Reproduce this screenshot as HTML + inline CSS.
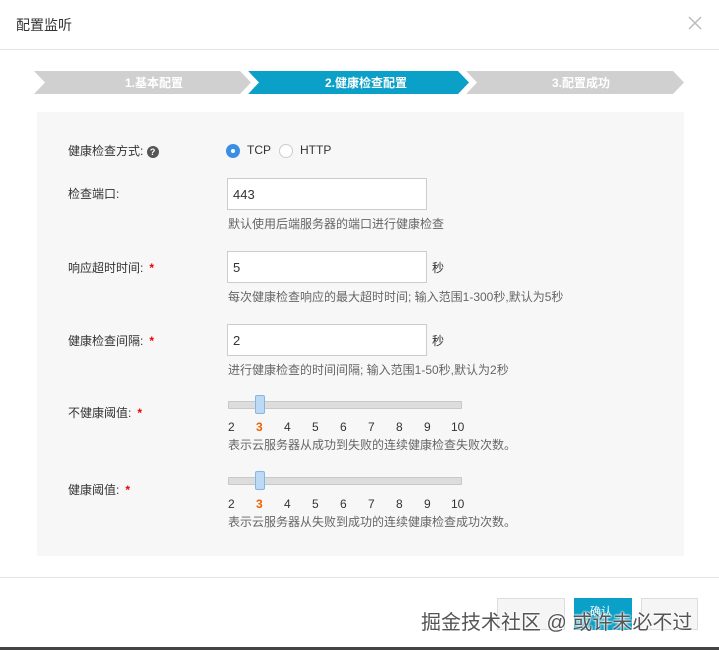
<!DOCTYPE html>
<html><head><meta charset="utf-8"><style>
*{margin:0;padding:0;box-sizing:border-box}
body{width:719px;height:650px;background:#fff;position:relative;overflow:hidden;font-family:"Liberation Sans","Noto Sans CJK SC",sans-serif;color:#333}
.a{position:absolute;white-space:nowrap}
.lbl{font-size:12px;color:#333}
.hint{font-size:12px;color:#666}
.inp{position:absolute;border:1px solid #ccc;background:#fff;height:32px;font-size:13px;padding:8px 0 0 5px;color:#333}
.star{color:#e00;font-weight:bold;margin-left:6px}
.track{position:absolute;left:228px;width:234px;height:8px;background:#ddd;border:1px solid #c8c8c8;border-radius:1px}
.thumb{position:absolute;left:255px;width:10px;height:19px;background:#bcd9f5;border:1px solid #88b5e0;border-radius:2px}
.num{position:absolute;font-size:12px;color:#333}
</style></head><body>
<div class="a" style="left:16px;top:15px;font-size:14px;color:#333">配置监听</div>
<svg class="a" style="left:688px;top:16px" width="14" height="14"><path d="M1 1L13 13M13 1L1 13" stroke="#bbb" stroke-width="1.5"/></svg>
<div class="a" style="left:0;top:49px;width:719px;height:1px;background:#e5e5e5"></div>
<svg class="a" style="left:0;top:70px" width="719" height="26">
<polygon points="34,1 240,1 251,12.5 240,24 34,24 45,12.5" fill="#d0d0d0"/>
<polygon points="248,1 458,1 469,12.5 458,24 248,24 259,12.5" fill="#0aa0c8"/>
<polygon points="466,1 673,1 684,12.5 673,24 466,24 477,12.5" fill="#d0d0d0"/>
<polyline points="246,0 257,12.5 246,25" fill="none" stroke="#fff" stroke-width="2"/>
<polyline points="464,0 475,12.5 464,25" fill="none" stroke="#fff" stroke-width="2"/>
<text x="154" y="17" font-size="12" fill="#fff" text-anchor="middle" font-family="Liberation Sans,Noto Sans CJK SC,sans-serif" font-weight="bold">1.基本配置</text>
<text x="366" y="17" font-size="12" fill="#fff" text-anchor="middle" font-family="Liberation Sans,Noto Sans CJK SC,sans-serif" font-weight="bold">2.健康检查配置</text>
<text x="581" y="17" font-size="12" fill="#fff" text-anchor="middle" font-family="Liberation Sans,Noto Sans CJK SC,sans-serif" font-weight="bold">3.配置成功</text>
</svg>
<div class="a" style="left:37px;top:112px;width:647px;height:444px;background:#f7f7f7"></div>

<div class="a lbl" style="left:68px;top:142px">健康检查方式: <span style="display:inline-block;width:12px;height:12px;border-radius:6px;background:#555;color:#fff;font-size:9px;text-align:center;line-height:12px;font-weight:bold;vertical-align:0px">?</span></div>
<div class="a" style="left:226px;top:144px;width:14px;height:14px;border-radius:7px;background:#3a8ee6"><div style="position:absolute;left:5px;top:5px;width:4px;height:4px;border-radius:2px;background:#fff"></div></div>
<div class="a lbl" style="left:247px;top:143px">TCP</div>
<div class="a" style="left:279px;top:144px;width:14px;height:14px;border-radius:7px;background:#fff;border:1px solid #ccc"></div>
<div class="a lbl" style="left:300px;top:143px">HTTP</div>

<div class="a lbl" style="left:68px;top:185px">检查端口:</div>
<div class="inp" style="left:227px;top:178px;width:200px">443</div>
<div class="a hint" style="left:228px;top:215px">默认使用后端服务器的端口进行健康检查</div>

<div class="a lbl" style="left:68px;top:259px">响应超时时间:<span class="star">*</span></div>
<div class="inp" style="left:227px;top:251px;width:200px">5</div>
<div class="a lbl" style="left:432px;top:259px">秒</div>
<div class="a hint" style="left:228px;top:288px">每次健康检查响应的最大超时时间; 输入范围1-300秒,默认为5秒</div>

<div class="a lbl" style="left:68px;top:332px">健康检查间隔:<span class="star">*</span></div>
<div class="inp" style="left:227px;top:324px;width:200px">2</div>
<div class="a lbl" style="left:432px;top:332px">秒</div>
<div class="a hint" style="left:228px;top:361px">进行健康检查的时间间隔; 输入范围1-50秒,默认为2秒</div>

<div class="a lbl" style="left:68px;top:404px">不健康阈值:<span class="star">*</span></div>
<div class="track" style="top:401px"></div><div class="thumb" style="top:395px"></div>
<div class="a hint" style="left:228px;top:436px">表示云服务器从成功到失败的连续健康检查失败次数。</div>

<div class="a lbl" style="left:68px;top:481px">健康阈值:<span class="star">*</span></div>
<div class="track" style="top:477px"></div><div class="thumb" style="top:471px"></div>
<div class="a hint" style="left:228px;top:513px">表示云服务器从失败到成功的连续健康检查成功次数。</div>

<div id="n1"></div>
<div class="a" style="left:0;top:577px;width:719px;height:1px;background:#e5e5e5"></div>
<div class="a" style="left:497px;top:598px;width:68px;height:32px;background:#f5f5f5;border:1px solid #ddd"></div>
<div class="a" style="left:574px;top:598px;width:58px;height:32px;background:#0aa0c8"></div>
<div class="a" style="left:641px;top:598px;width:57px;height:32px;background:#f5f5f5;border:1px solid #ddd"></div>
<div class="a" style="left:590px;top:603px;font-size:11px;color:#fff">确认</div>
<div class="a" style="left:421px;top:606px;font-size:20px;color:#555;text-shadow:0 0 2px #fff,0 0 2px #fff,0 0 2px #fff">掘金技术社区 @ 或许未必不过</div>
<div class="a" style="left:0;top:647px;width:719px;height:3px;background:#444"></div>
<script>
var h='';[[420],[497]].forEach(function(r){[2,3,4,5,6,7,8,9,10].forEach(function(n,i){var x=231+i*28-(n==10?4:3);h+='<div class="num" style="left:'+x+'px;top:'+r[0]+'px;'+(n==3?'color:#f06000;font-weight:bold':'')+'">'+n+'</div>';});});
document.getElementById('n1').outerHTML=h;
</script>
</body></html>
